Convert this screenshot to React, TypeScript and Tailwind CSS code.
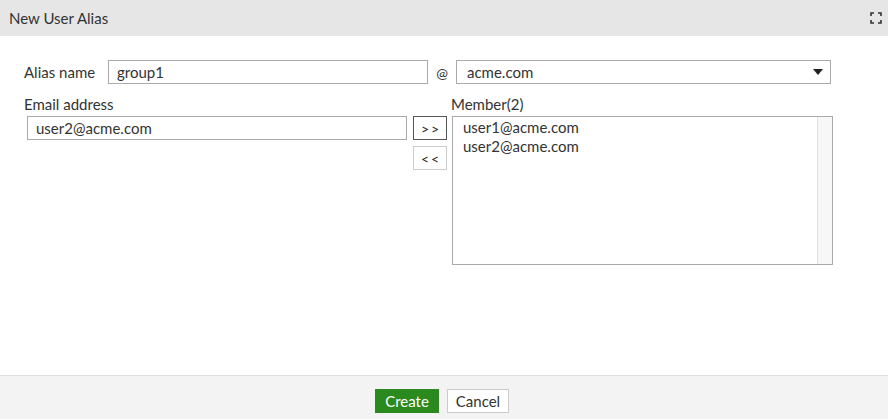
import React from 'react';

function ExpandIcon() {
  return (
    <svg width="12" height="12" viewBox="0 0 12 12" fill="none" stroke="#333" strokeWidth="1.6">
      <path d="M1 4V1h3" />
      <path d="M8 1h3v3" />
      <path d="M11 8v3H8" />
      <path d="M4 11H1V8" />
    </svg>
  );
}

function App() {
  const members = ['user1@acme.com', 'user2@acme.com'];

  return (
    <div
      className="w-[888px] h-[419px] flex flex-col bg-white text-[15px] text-[#333]"
      style={{ fontFamily: 'Lato, "Open Sans", sans-serif' }}
    >
      <div className="h-9 bg-[#e6e6e6] flex items-center justify-between pl-[9px] pr-[6px] shrink-0">
        <span className="text-[#333]">New User Alias</span>
        <ExpandIcon />
      </div>

      <div className="flex-1 pt-6 pl-6">
        <div className="flex items-center h-6">
          <span className="w-[84px]">Alias name</span>
          <div className="w-[320px] h-6 border border-[#aaa] px-2 flex items-center">group1</div>
          <span className="w-7 text-center text-[14px]">@</span>
          <div className="w-[375px] h-6 border border-[#aaa] pl-[10px] pr-[7px] flex items-center justify-between">
            <span>acme.com</span>
            <svg width="10" height="6" viewBox="0 0 10 6">
              <path d="M0 0h10L5 6z" fill="#222" />
            </svg>
          </div>
        </div>

        <div className="flex mt-[10px]">
          <div className="flex flex-col">
            <span className="h-5 leading-5 mb-[2px]">Email address</span>
            <div className="ml-[3px] w-[380px] h-6 border border-[#aaa] px-2 flex items-center">
              user2@acme.com
            </div>
          </div>
          <div className="flex flex-col gap-[6px] ml-[6px] mt-[22px]">
            <button className="w-[34px] h-6 border border-[#555] bg-white text-[14px] text-[#222] tracking-[2px] pl-[2px] flex items-center justify-center">
              &gt;&gt;
            </button>
            <button className="w-[34px] h-6 border border-[#ccc] bg-white text-[14px] text-[#222] tracking-[2px] pl-[2px] flex items-center justify-center">
              &lt;&lt;
            </button>
          </div>
          <div className="flex flex-col ml-[5px]">
            <span className="h-5 leading-5 mb-[2px] -ml-px">Member(2)</span>
            <div className="w-[381px] h-[149px] border border-[#aaa] flex">
              <div className="flex-1 pl-[10px] pt-[1px] leading-[19px]">
                {members.map((m) => (
                  <div key={m}>{m}</div>
                ))}
              </div>
              <div className="w-[15px] bg-[#f7f7f7] border-l border-[#e3e3e3]" />
            </div>
          </div>
        </div>
      </div>

      <div className="h-11 shrink-0 bg-[#f3f3f3] border-t border-[#ddd] flex items-start pt-[13px] pr-[4px] justify-center gap-2">
        <button className="w-16 h-6 bg-[#2b8a1e] text-white text-[15px] flex items-center justify-center">
          Create
        </button>
        <button className="w-[62px] h-6 bg-white border border-[#ccc] text-[15px] flex items-center justify-center">
          Cancel
        </button>
      </div>
    </div>
  );
}

export default App;
